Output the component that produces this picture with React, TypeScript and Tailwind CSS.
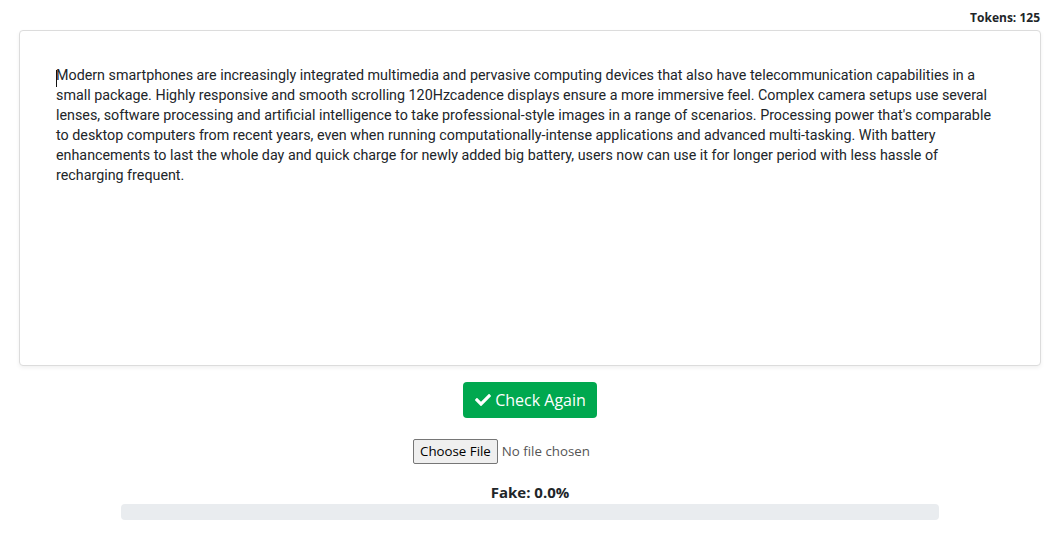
import { useState } from 'react';

const essay =
    "Modern smartphones are increasingly integrated multimedia and pervasive computing devices that also have telecommunication capabilities in a small package. Highly responsive and smooth scrolling 120Hzcadence displays ensure a more immersive feel. Complex camera setups use several lenses, software processing and artificial intelligence to take professional-style images in a range of scenarios. Processing power that's comparable to desktop computers from recent years, even when running computationally-intense applications and advanced multi-tasking. With battery enhancements to last the whole day and quick charge for newly added big battery, users now can use it for longer period with less hassle of recharging frequent.";

function CheckIcon() {
    return (
        <svg viewBox="0 0 512 512" className="w-[16px] h-[16px] fill-current">
            <path d="M173.898 439.404l-166.4-166.4c-9.997-9.997-9.997-26.206 0-36.204l36.203-36.204c9.997-9.998 26.207-9.998 36.204 0L192 312.69 432.095 72.596c9.997-9.997 26.207-9.997 36.204 0l36.203 36.204c9.997 9.997 9.997 26.206 0 36.204l-294.4 294.401c-9.998 9.997-26.207 9.997-36.204-.001z" />
        </svg>
    );
}

export default function App() {
    const [fake] = useState(0);

    return (
        <div className="min-h-screen bg-white pl-[19px] pr-[21px] font-['Open_Sans',sans-serif] text-[#212529]">
            {/* token count */}
            <div className="flex justify-end pt-[10px] pr-[1px] text-[12px] leading-[16px] font-bold">
                Tokens: 125
            </div>

            {/* essay box */}
            <div className="relative mt-[4px] h-[336px] rounded-[4px] border border-[#dcdcdc] shadow-[0_2px_4px_rgba(0,0,0,0.06)] bg-white px-[36px] pt-[34px]">
                <span className="absolute left-[36px] top-[39px] w-[1px] h-[17px] bg-[#111]" />
                <p className="font-['Roboto',sans-serif] text-[14.3px] leading-[20px] text-[#212529]">{essay}</p>
            </div>

            {/* action */}
            <div className="flex justify-center mt-[16px]">
                <button className="flex items-center gap-[4px] h-[36px] pl-[12px] pr-[11px] rounded-[4px] bg-[#00a84f] text-white text-[16px] leading-[24px]">
                    <CheckIcon />
                    Check Again
                </button>
            </div>

            {/* file input */}
            <div className="flex justify-center mt-[21px]">
                <div className="flex items-center w-[234px] text-[13.3px]">
                    <label className="h-[25px] px-[6px] flex items-center border border-[#767676] rounded-[2px] bg-[#efefef] text-black cursor-pointer">
                        Choose File
                        <input type="file" className="hidden" />
                    </label>
                    <span className="ml-[4px] text-[#555]">No file chosen</span>
                </div>
            </div>

            {/* result */}
            <div className="mt-[18px] text-center text-[15px] leading-[20px] font-bold">Fake: {fake.toFixed(1)}%</div>
            <div className="mx-auto mt-[2px] w-4/5 h-[16px] rounded-[4px] bg-[#e9ecef] overflow-hidden">
                <div className="h-full bg-[#00a84f]" style={{ width: `${fake}%` }} />
            </div>
        </div>
    );
}
